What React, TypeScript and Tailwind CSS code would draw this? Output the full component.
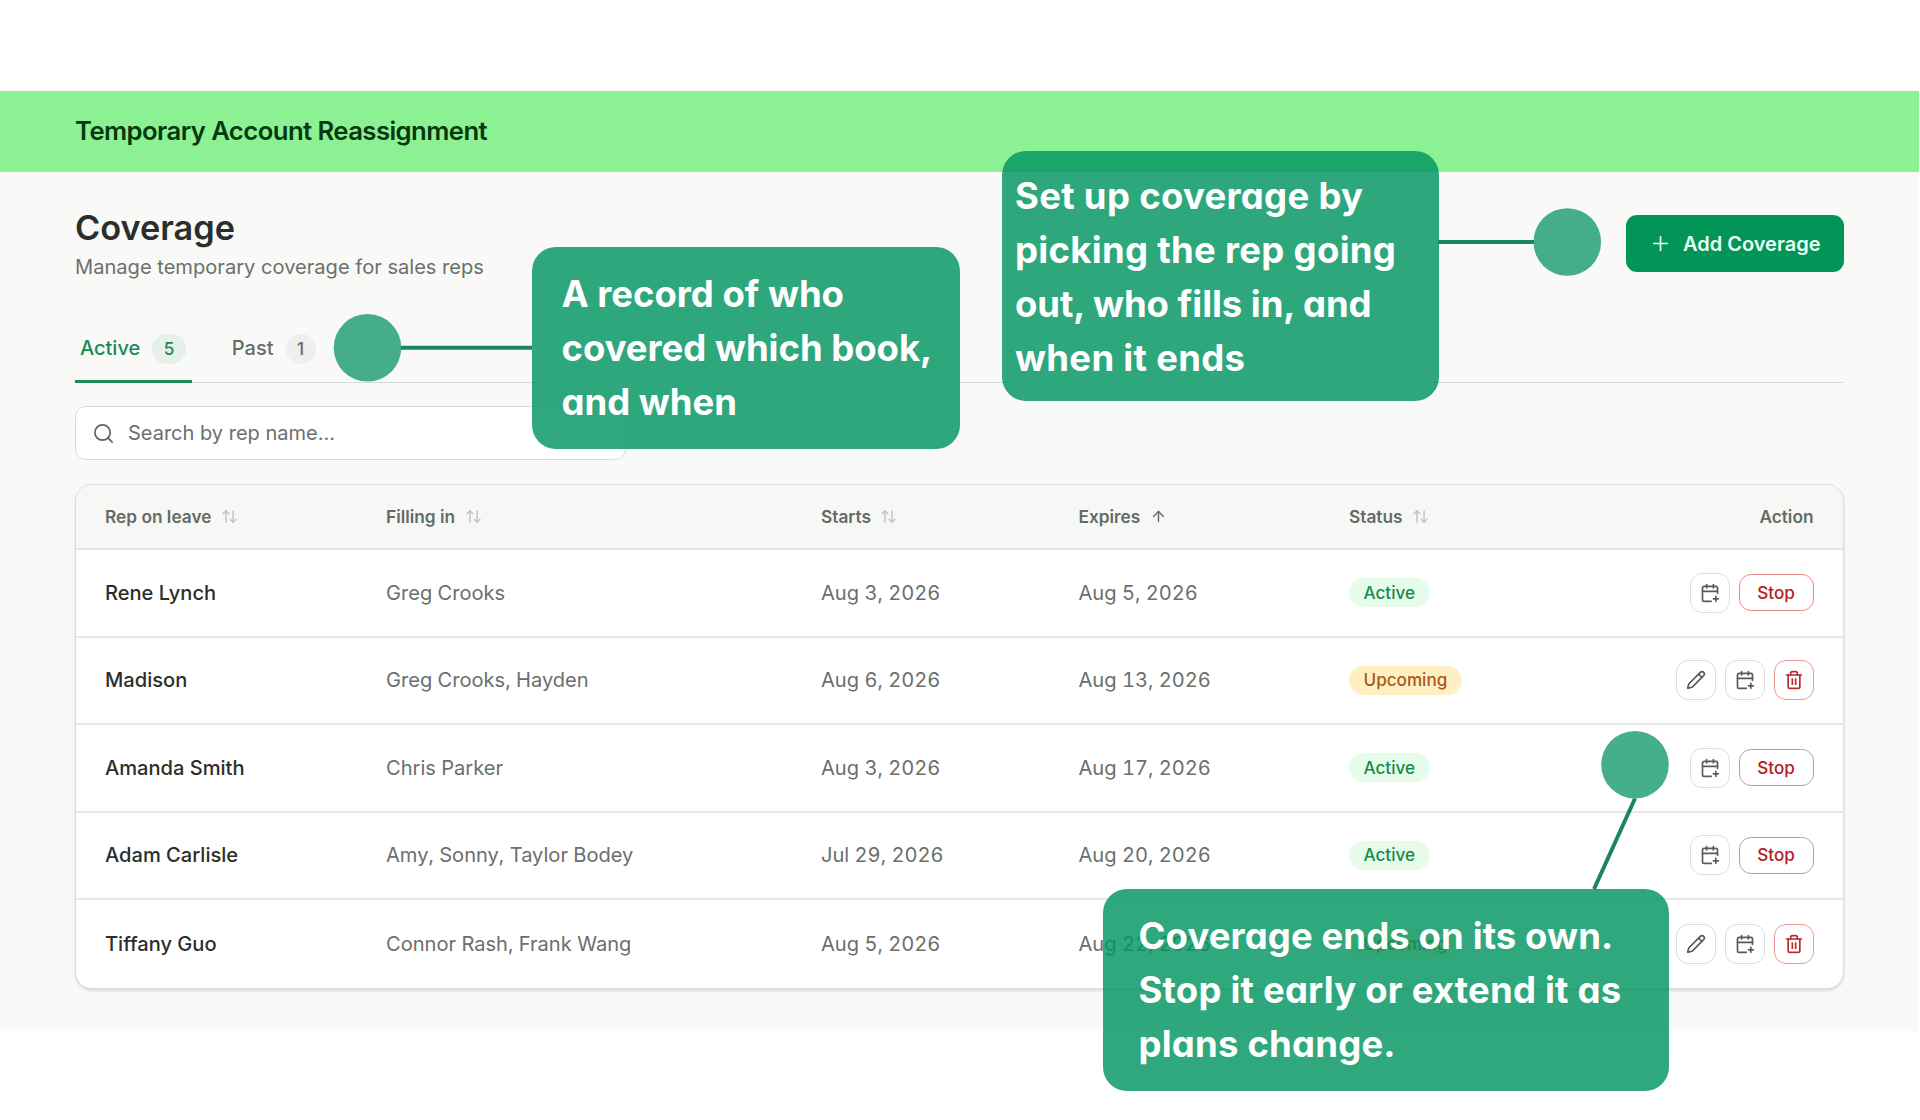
import React, { useState } from 'react';
import { ArrowUp, ArrowUpDown, CalendarPlus, Pencil, Plus, Search, Trash2 } from 'lucide-react';

type Status = 'Active' | 'Upcoming';

interface Coverage {
  rep: string;
  fillingIn: string;
  starts: string;
  expires: string;
  status: Status;
}

const coverages: Coverage[] = [
  { rep: 'Rene Lynch', fillingIn: 'Greg Crooks', starts: 'Aug 3, 2026', expires: 'Aug 5, 2026', status: 'Active' },
  { rep: 'Madison', fillingIn: 'Greg Crooks, Hayden', starts: 'Aug 6, 2026', expires: 'Aug 13, 2026', status: 'Upcoming' },
  { rep: 'Amanda Smith', fillingIn: 'Chris Parker', starts: 'Aug 3, 2026', expires: 'Aug 17, 2026', status: 'Active' },
  { rep: 'Adam Carlisle', fillingIn: 'Amy, Sonny, Taylor Bodey', starts: 'Jul 29, 2026', expires: 'Aug 20, 2026', status: 'Active' },
  { rep: 'Tiffany Guo', fillingIn: 'Connor Rash, Frank Wang', starts: 'Aug 5, 2026', expires: 'Aug 22, 2026', status: 'Upcoming' },
];

const columns = ['Rep on leave', 'Filling in', 'Starts', 'Expires', 'Status'];

const gridCols = 'grid grid-cols-[281px_435px_257.5px_270.5px_150px_1fr] items-center pl-[29px] pr-[29.5px]';

function StatusBadge({ status }: { status: Status }) {
  const colors = status === 'Active' ? 'bg-[#e6fceb] text-[#148a4b]' : 'bg-[#fef0c3] text-[#a8591a]';
  return (
    <span className={`inline-flex h-[29px] items-center rounded-full px-[14.5px] text-[17.1px] font-medium ${colors}`}>
      {status}
    </span>
  );
}

function IconButton({ danger, label, children }: { danger?: boolean; label: string; children: React.ReactNode }) {
  const colors = danger ? 'border-[#e99a98] text-[#b92a2a]' : 'border-[#dcdedc] text-[#565c59]';
  return (
    <button
      type="button"
      aria-label={label}
      className={`flex size-10 items-center justify-center rounded-[12px] border bg-white ${colors}`}
    >
      {children}
    </button>
  );
}

function RowActions({ status }: { status: Status }) {
  return (
    <div className="flex items-center justify-end gap-[9px]">
      {status === 'Upcoming' && (
        <IconButton label="Edit">
          <Pencil size={20} />
        </IconButton>
      )}
      <IconButton label="Extend">
        <CalendarPlus size={20} />
      </IconButton>
      {status === 'Upcoming' ? (
        <IconButton label="Delete" danger>
          <Trash2 size={20} />
        </IconButton>
      ) : (
        <button
          type="button"
          className="h-[37px] w-[75px] rounded-[12px] border border-[#e48f8d] bg-white text-[17.1px] font-medium text-[#b5211f]"
        >
          Stop
        </button>
      )}
    </div>
  );
}

function Tab({ label, count, active, onClick }: { label: string; count: number; active: boolean; onClick: () => void }) {
  return (
    <button
      type="button"
      onClick={onClick}
      className={`-mb-px flex h-[68px] items-center gap-[12px] border-b-[3px] pr-[6px] pl-[5px] font-medium ${
        active ? 'border-[#1a8a58] text-[#1a8a55]' : 'border-transparent text-[#666b68]'
      }`}
    >
      {label}
      <span
        className={`mt-[2px] flex h-[30px] items-center rounded-full px-[11.5px] text-[17.1px] ${
          active ? 'bg-[#e6efe9]' : 'bg-[#efefed]'
        }`}
      >
        {count}
      </span>
    </button>
  );
}

function Callout({ className, children }: { className: string; children: React.ReactNode }) {
  return (
    <div
      className={`absolute rounded-[24px] bg-[#029560]/82 text-[36.5px] leading-[54px] font-bold whitespace-nowrap text-white [font-feature-settings:'cv11'] ${className}`}
    >
      {children}
    </div>
  );
}

export default function App() {
  const [tab, setTab] = useState<'active' | 'past'>('active');

  return (
    <div className="relative h-[1120px] w-[1920px] overflow-hidden bg-white pt-[91px] font-['Inter',sans-serif] text-[20px] text-[#2b2e2c]">
      <header className="mr-px flex h-[81px] items-center bg-[#8cf193] pl-[75px]">
        <span className="text-[25.7px] font-semibold tracking-[-0.57px] text-[#05390f]">Temporary Account Reassignment</span>
      </header>

      <main className="mr-px h-[859px] bg-[#f9faf8] px-[75px] pt-[32px]">
        <div className="flex items-center justify-between">
          <div>
            <h1 className="text-[34.3px] leading-[48px] font-semibold">Coverage</h1>
            <p className="text-[20.1px] leading-[31px] text-[#6a706c]">Manage temporary coverage for sales reps</p>
          </div>
          <button
            type="button"
            className="flex h-[57px] items-center gap-[11px] rounded-[11px] bg-[#039557] pr-[23.5px] pl-[23px] font-semibold text-[#e9fff4]"
          >
            <Plus size={23} strokeWidth={1.8} />
            Add Coverage
          </button>
        </div>

        <div className="mt-[32px] flex gap-[35px] border-b border-[#d6d9d6]">
          <Tab label="Active" count={5} active={tab === 'active'} onClick={() => setTab('active')} />
          <Tab label="Past" count={1} active={tab === 'past'} onClick={() => setTab('past')} />
        </div>

        <label className="mt-[23px] flex h-[54px] w-[551px] items-center rounded-[11px] border border-[#dbdddb] bg-white pl-[16px]">
          <Search size={23} strokeWidth={1.8} className="text-[#5f6562]" />
          <input
            type="text"
            placeholder="Search by rep name..."
            className="ml-[13px] flex-1 outline-none placeholder:text-[#6a706c]"
          />
        </label>

        <div className="mt-[24px] overflow-hidden rounded-[17px] border border-[#dbdddb] bg-white shadow-[0_2px_3px_rgba(0,0,0,0.12)]">
          <div className={`${gridCols} h-[65px] border-b-2 border-[#e3e4e3] bg-[#f7f8f6] text-[17.3px] font-semibold text-[#646b67]`}>
            {columns.map((col) => (
              <div key={col} className="flex items-center gap-[9.5px]">
                {col}
                {col === 'Expires' ? (
                  <ArrowUp size={17} />
                ) : (
                  <ArrowUpDown size={17} className="text-[#bfc2c0]" />
                )}
              </div>
            ))}
            <div className="text-right">Action</div>
          </div>
          {coverages.map((row) => (
            <div
              key={row.rep}
              className={`${gridCols} h-[87.5px] border-b-2 border-[#e6e7e6] text-[20.08px] tabular-nums text-[#6a706c] last:border-b-0`}
            >
              <div className="font-medium text-[#2b2e2c]">{row.rep}</div>
              <div>{row.fillingIn}</div>
              <div>{row.starts}</div>
              <div>{row.expires}</div>
              <div className="flex">
                <StatusBadge status={row.status} />
              </div>
              <RowActions status={row.status} />
            </div>
          ))}
        </div>
      </main>

      {/* Connectors and dots */}
      <svg className="absolute inset-0" width="1920" height="1120" fill="none" stroke="#1a8560" strokeWidth="4">
        <path d="M401 347.7H532" />
        <path d="M1438 242H1534" />
        <path d="M1635 798.5L1594 889" />
        <g fill="#01925f" fillOpacity="0.73" stroke="none">
          <circle cx="367.5" cy="347.8" r="33.8" />
          <circle cx="1567.3" cy="242" r="33.8" />
          <circle cx="1635" cy="764.7" r="33.8" />
        </g>
      </svg>

      <Callout className="top-[247px] left-[531.5px] h-[202px] w-[428.5px] pt-[20px] pl-[30px] tracking-[-0.02px]">
        A record of who
        <br />
        covered which book,
        <br />
        and when
      </Callout>
      <Callout className="top-[151px] left-[1002px] h-[250px] w-[436.5px] pt-[18px] pl-[13px] tracking-[0.3px]">
        Set up coverage by
        <br />
        picking the rep going
        <br />
        <span className="tracking-[-0.05px]">out, who fills in, and</span>
        <br />
        when it ends
      </Callout>
      <Callout className="top-[889px] left-[1103px] h-[201.5px] w-[565.5px] pt-[20px] pl-[35.5px] tracking-[0.2px]">
        <span className="tracking-[0.1px]">Coverage ends on its own.</span>
        <br />
        Stop it early or extend it as
        <br />
        plans change.
      </Callout>
    </div>
  );
}
